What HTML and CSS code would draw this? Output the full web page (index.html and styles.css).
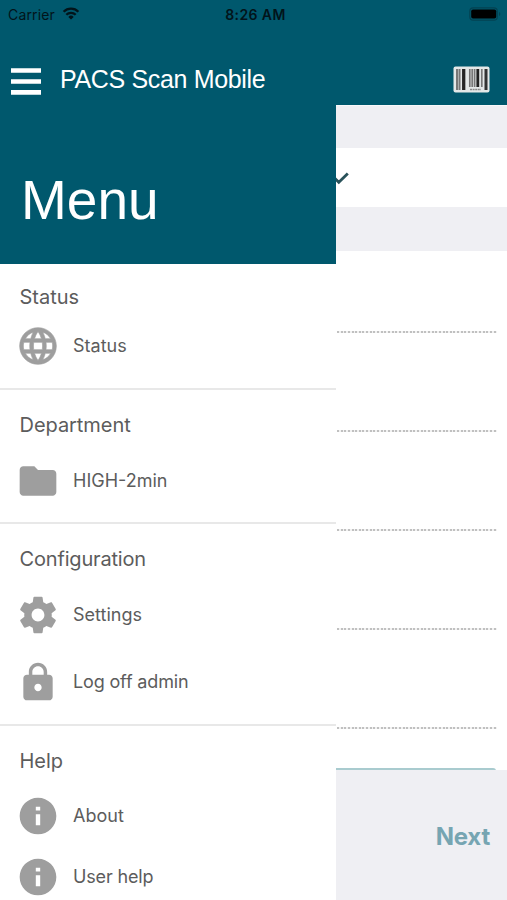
FILE: index.html
```
<!DOCTYPE html>
<html lang="en">
<head>
<meta charset="utf-8">
<title>PACS Scan Mobile</title>
<link rel="stylesheet" href="styles.css">
</head>
<body>
<div class="app">
  <header class="top">
    <div class="statusbar">
      <div class="carrier"><span>Carrier</span>
        <svg class="wifi" viewBox="0 0 18 13"><path d="M1.600 4.700A10.600 10.600 0 0 1 16.400 4.700M4.300 7.800a6.700 6.700 0 0 1 9.400 0" fill="none" stroke="#02141a" stroke-width="2.300"/><path d="M6.300 9.900a3.900 3.900 0 0 1 5.400 0L9 12.600z" fill="#02141a"/></svg>
      </div>
      <div class="time">8:26 AM</div>
      <svg class="battery" viewBox="0 0 32 14"><rect x=".8" y=".8" width="27.500" height="12.400" rx="3.500" fill="none" stroke="#034252" stroke-width="1.200"/><rect x="2.200" y="2.500" width="25" height="9" rx="1.800" fill="#000"/><path d="M30 5v4q1.300-.6 1.300-2T30 5z" fill="#034252"/></svg>
    </div>
    <div class="navbar">
      <svg class="burger" viewBox="0 0 30 27"><path d="M0 2.500h30M0 13.500h30M0 24.400h30" stroke="#fff" stroke-width="4.600"/></svg>
      <h1 class="title">PACS Scan Mobile</h1>
      <svg class="barcode" viewBox="0 0 37 27"><rect x=".5" y=".5" width="36" height="26" rx="2" fill="#e4e8e8"/><path d="M4 3v21M6.500 3v21" stroke="#777" stroke-width="2"/><path d="M10.700 3v21" stroke="#252525" stroke-width="3.300"/><path d="M16.800 3v18M19.200 3v18M21.600 3v18M28.800 3v18" stroke="#777" stroke-width="1.700"/><path d="M24.800 3v18" stroke="#222" stroke-width="2.800"/><path d="M33 3v21" stroke="#333" stroke-width="3"/><path d="M17 23.500h11" stroke="#888" stroke-width="1.600" stroke-dasharray="2 .6"/></svg>
    </div>
  </header>
  <main class="body">
    <nav class="drawer">
      <div class="menu-head">Menu</div>
      <section class="group status">
        <h2>Status</h2>
        <div class="item"><svg class="globe" viewBox="0 0 24 24"><path d="M11.990 2C6.470 2 2 6.480 2 12s4.470 10 9.990 10C17.520 22 22 17.520 22 12S17.520 2 11.990 2zm6.930 6h-2.950c-.32-1.250-.78-2.450-1.380-3.560 1.840.63 3.370 1.910 4.330 3.560zM12 4.040c.83 1.200 1.480 2.530 1.910 3.960h-3.820c.43-1.430 1.080-2.760 1.910-3.960zM4.260 14C4.100 13.360 4 12.690 4 12s.1-1.360.26-2h3.380c-.08.66-.14 1.320-.14 2s.06 1.340.14 2H4.260zm.82 2h2.950c.32 1.250.78 2.450 1.380 3.560-1.840-.63-3.370-1.900-4.330-3.560zm2.950-8H5.080c.96-1.660 2.490-2.930 4.330-3.560C8.810 5.550 8.350 6.750 8.030 8zM12 19.960c-.83-1.200-1.480-2.530-1.910-3.960h3.820c-.43 1.430-1.080 2.760-1.910 3.960zM14.340 14H9.660c-.09-.66-.16-1.320-.16-2s.07-1.350.16-2h4.680c.09.65.16 1.320.16 2s-.07 1.340-.16 2zm.25 5.560c.6-1.110 1.060-2.310 1.380-3.560h2.950c-.96 1.650-2.490 2.930-4.330 3.560zM16.360 14c.08-.66.14-1.320.14-2s-.06-1.340-.14-2h3.380c.16.64.26 1.310.26 2s-.1 1.360-.26 2h-3.380z"/></svg><span>Status</span></div>
      </section>
      <section class="group department">
        <h2>Department</h2>
        <div class="item"><svg viewBox="0 0 24 24"><path d="M10 4H4c-1.100 0-1.990.9-1.990 2L2 18c0 1.100.9 2 2 2h16c1.100 0 2-.9 2-2V8c0-1.100-.9-2-2-2h-8l-2-2z"/></svg><span>HIGH-2min</span></div>
      </section>
      <section class="group configuration">
        <h2>Configuration</h2>
        <div class="item"><svg viewBox="0 0 24 24"><path d="M19.430 12.980c.04-.32.07-.64.07-.98s-.03-.66-.07-.98l2.110-1.650c.19-.15.24-.42.12-.64l-2-3.460c-.12-.22-.39-.3-.61-.22l-2.490 1c-.52-.4-1.080-.73-1.690-.98l-.38-2.650C14.460 2.180 14.250 2 14 2h-4c-.25 0-.46.18-.49.42l-.38 2.650c-.61.25-1.170.59-1.690.98l-2.490-1c-.23-.09-.49 0-.61.22l-2 3.460c-.13.22-.07.49.12.64l2.110 1.650c-.04.32-.07.65-.07.98s.03.66.07.98l-2.110 1.650c-.19.15-.24.42-.12.64l2 3.460c.12.22.39.3.61.22l2.490-1c.52.4 1.080.73 1.690.98l.38 2.650c.03.24.24.42.49.42h4c.25 0 .46-.18.49-.42l.38-2.650c.61-.25 1.170-.59 1.690-.98l2.490 1c.23.09.49 0 .61-.22l2-3.460c.12-.22.07-.49-.12-.64l-2.110-1.650zM12 15.500c-1.930 0-3.500-1.570-3.500-3.500s1.570-3.500 3.500-3.500 3.500 1.570 3.500 3.500-1.570 3.500-3.500 3.500z"/></svg><span>Settings</span></div>
        <div class="item"><svg viewBox="0 0 24 24"><path fill-rule="evenodd" d="M18 8h-1V6.500c0-2.760-2.240-5-5-5s-5 2.240-5 5V8H6c-1.100 0-2 .9-2 2v10c0 1.100.9 2 2 2h12c1.100 0 2-.9 2-2V10c0-1.100-.9-2-2-2zm-6 9c-1.100 0-2-.9-2-2s.9-2 2-2 2 .9 2 2-.9 2-2 2zm3.100-9H8.900V6.500c0-1.710 1.390-3.100 3.100-3.100s3.100 1.390 3.100 3.100V8z"/></svg><span class="logoff">Log off admin</span></div>
      </section>
      <section class="group help">
        <h2>Help</h2>
        <div class="item"><svg viewBox="0 0 24 24"><path d="M12 2C6.480 2 2 6.480 2 12s4.480 10 10 10 10-4.480 10-10S17.520 2 12 2zm1.200 15h-2.400v-6h2.400v6zm0-8h-2.400V7h2.400v2z"/></svg><span>About</span></div>
        <div class="item"><svg viewBox="0 0 24 24"><path d="M12 2C6.480 2 2 6.480 2 12s4.480 10 10 10 10-4.480 10-10S17.520 2 12 2zm1.200 15h-2.400v-6h2.400v6zm0-8h-2.400V7h2.400v2z"/></svg><span class="user">User help</span></div>
      </section>
    </nav>
    <div class="content">
      <div class="band first"></div>
      <div class="check-row"><svg viewBox="0 0 13 14"><path d="M-3 4.500L2.800 10.300 11.800 1.500" fill="none" stroke="#29525a" stroke-width="2.800"/></svg></div>
      <div class="band"></div>
      <div class="form">
        <div class="field first"></div>
        <div class="field"></div>
        <div class="field"></div>
        <div class="field"></div>
        <div class="field"></div>
        <div class="box"></div>
      </div>
      <footer class="footer"><span class="next">Next</span></footer>
    </div>
  </main>
</div>
</body>
</html>
```
FILE: styles.css
```
* { box-sizing: border-box; }
body { margin: 0; background: #fff; font-family: Inter, "Liberation Sans", sans-serif; }
svg { display: block; flex: none; }
.app { width: 507px; height: 900px; overflow: hidden; display: flex; flex-direction: column; }

.top { height: 105px; flex: none; background: #00586d; }
.statusbar { height: 28px; display: grid; grid-template-columns: 1fr auto 1fr; align-items: center; padding: 0 6px 0 8px; color: #02141a; }
.carrier { display: flex; align-items: center; gap: 7px; font-size: 14px; letter-spacing: .15px; }
.wifi { width: 18px; height: 13px; margin-top: -2px; }
.time { font-size: 14px; font-weight: 600; letter-spacing: .4px; margin-left: 2px; }
.battery { width: 32px; height: 14px; justify-self: end; margin-top: -1px; }
.navbar { height: 77px; display: flex; align-items: flex-start; padding: 0 17px 0 11px; }
.burger { width: 30px; height: 27px; margin-top: 40px; }
.title { margin: 36px 0 0 19px; font: 400 25px/30px "Liberation Sans", sans-serif; letter-spacing: -.34px; color: #fff; white-space: nowrap; }
.barcode { width: 37px; height: 27px; margin: 38px 0 0 auto; }

.body { flex: 1; min-height: 0; display: grid; grid-template-columns: 336px 1fr; }
.drawer { overflow: hidden; background: #fff; color: #5c5c5c; }
.menu-head { height: 158.500px; padding: 63px 0 0 21px; background: #00586d; color: #fff; font: 400 55px/64px "Liberation Sans", sans-serif; }
.group { border-bottom: 2px solid #e8e8e8; padding: 21px 0 0 15.500px; }
.group h2 { margin: 0 0 0 4px; font-size: 20px; font-weight: 400; line-height: 28px; }
.status { height: 126.500px; padding-top: 19px; }
.department { height: 134px; }
.department h2 { letter-spacing: -.05px; }
.configuration { height: 201.500px; }
.configuration h2 { letter-spacing: -.17px; }
.help { height: 190px; border: 0; }
.item { height: 44px; display: flex; align-items: center; gap: 13.500px; font-size: 18px; line-height: 24px; }
.item svg { width: 44px; height: 44px; margin-top: -1px; fill: #9e9e9e; }
.item .globe { stroke: #9e9e9e; stroke-width: .35px; }
.logoff { letter-spacing: -.15px; }
.user { letter-spacing: -.15px; }
.status .item { margin-top: 13.500px; }
.department .item, .configuration .item { margin-top: 20px; }
.configuration .item + .item { margin-top: 23px; }
.help .item { margin-top: 19.500px; }
.help .item + .item { margin-top: 17px; }

.content { display: flex; flex-direction: column; min-width: 0; }
.band { height: 44px; background: #efeff3; }
.band.first { height: 43px; border-top: 1px solid #f8f8fa; }
.check-row { height: 59px; padding-top: 24px; }
.check-row svg { width: 13px; height: 14px; }
.form { height: 519px; padding: 0 10px 0 1px; }
.field { height: 99px; background: repeating-linear-gradient(90deg, #c0c0c0 0 2px, #f2f2f2 2px 3.640px) bottom / 100% 2px no-repeat; }
.field.first { height: 81.500px; }
.box { height: 3px; margin: 39.500px 1px 0 -1px; border-top: 2px solid #a9cbcf; border-right: 1px solid #a9cbcf; border-top-right-radius: 4px; }
.footer { flex: 1; background: #efeff3; display: flex; justify-content: flex-end; padding: 51px 17px 0 0; }
.next { font-size: 24px; line-height: 32px; font-weight: 700; letter-spacing: -.2px; color: #76a5b2; }
```
